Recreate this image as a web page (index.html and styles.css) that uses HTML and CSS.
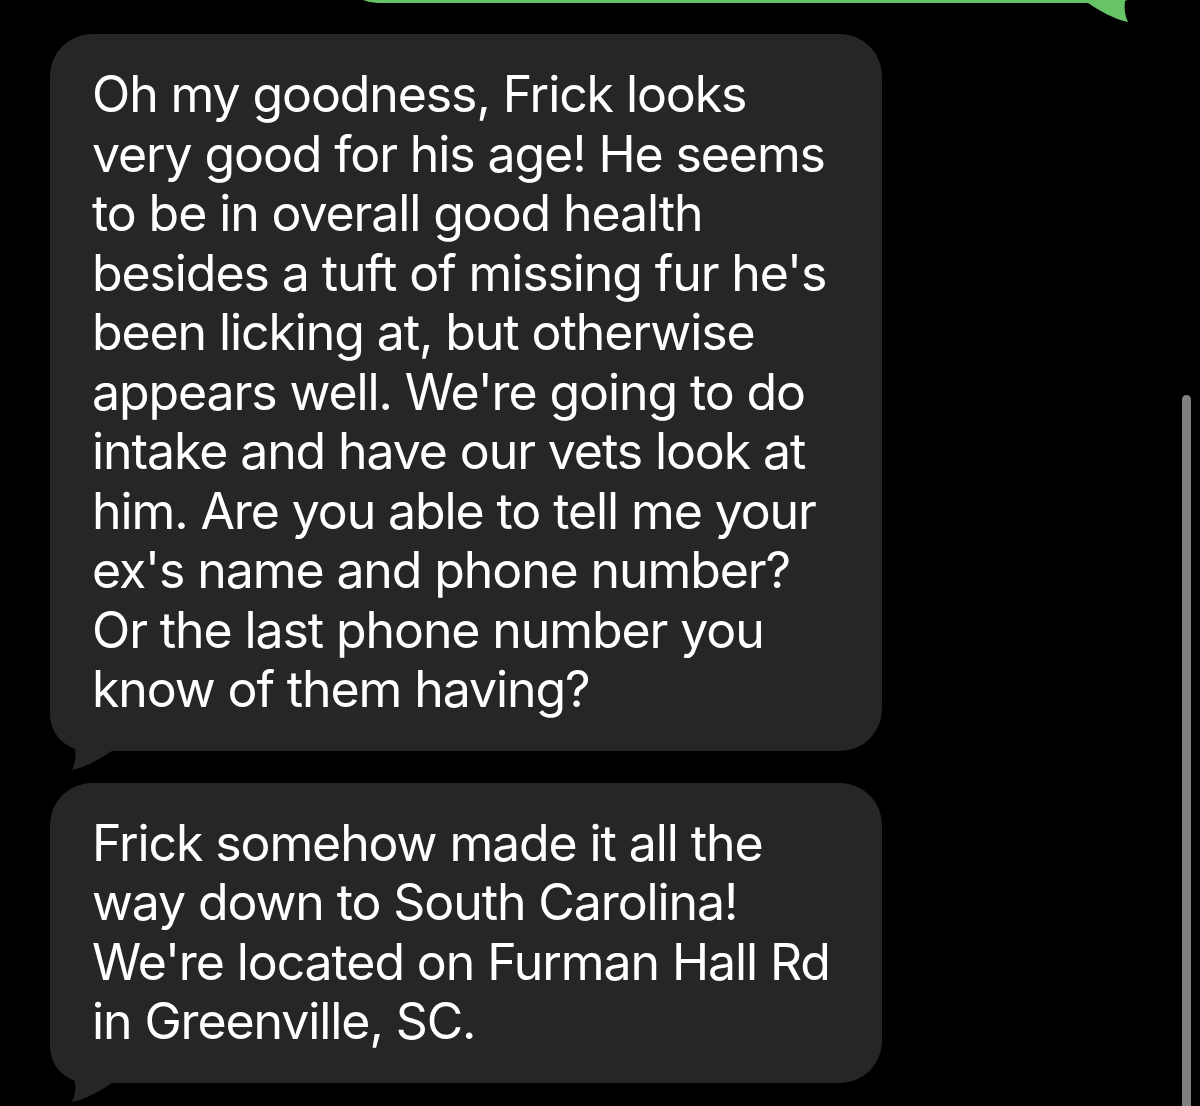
FILE: index.html
```html
<!DOCTYPE html>
<html lang="en">
<head>
    <meta charset="UTF-8">
    <meta name="viewport" content="width=device-width, initial-scale=1.0">
    <title>Messages</title>
    <link rel="stylesheet" href="styles.css">
</head>
<body>
    <div class="thread">
        <div class="bubble sent">
            <svg class="tail" viewBox="0 0 70 72" width="70" height="72">
                <path d="M0,0 L0,12 C0,30 10,42 25,48 C26,56 25,63 22,69 C36,66 50,58 62,50 L62,0 Z"/>
            </svg>
        </div>

        <div class="bubble received">
            <p>Oh my goodness, Frick looks<br>
            very good for his age! He seems<br>
            to be in overall good health<br>
            besides a tuft of missing fur he's<br>
            been licking at, but otherwise<br>
            appears well. We're going to do<br>
            intake and have our vets look at<br>
            him. Are you able to tell me your<br>
            ex's name and phone number?<br>
            Or the last phone number you<br>
            know of them having?</p>
            <svg class="tail" viewBox="0 0 70 72" width="70" height="72">
                <path d="M0,0 L0,12 C0,30 10,42 25,48 C26,56 25,63 22,69 C36,66 50,58 62,50 L62,0 Z"/>
            </svg>
        </div>

        <div class="bubble received">
            <p>Frick somehow made it all the<br>
            way down to South Carolina!<br>
            We're located on Furman Hall Rd<br>
            in Greenville, SC.</p>
            <svg class="tail" viewBox="0 0 70 72" width="70" height="72">
                <path d="M0,0 L0,12 C0,30 10,42 25,48 C26,56 25,63 22,69 C36,66 50,58 62,50 L62,0 Z"/>
            </svg>
        </div>
    </div>

    <div class="scrollbar"></div>
</body>
</html>
```

FILE: styles.css
```css
body {
    margin: 0;
    background: #000;
    height: 1106px;
    overflow: hidden;
    position: relative;
    font-family: Inter, "Open Sans", sans-serif;
}

.thread {
    display: flex;
    flex-direction: column;
    padding: 0 50px;
}

.bubble {
    position: relative;
    box-sizing: border-box;
    border-radius: 42px;
}

.bubble p {
    position: relative;
    z-index: 1; /* keep text above the tail */
    margin: 0;
    color: #fff;
    font-size: 50px;
    letter-spacing: -1.1px;
    line-height: 59.5px;
    white-space: nowrap;
}

/* outgoing green one, mostly scrolled off the top */
.sent {
    align-self: flex-end;
    width: 812px;
    height: 80px;
    margin-top: -77px;
    background: #66c466;
}

.received {
    align-self: flex-start;
    width: 832px;
    padding: 31px 42px;
    margin-top: 31px;
    background: #262628;
}

.received + .received {
    margin-top: 32px;
}

.tail {
    position: absolute;
    bottom: -22px;
}

.received .tail {
    left: 0;
    fill: #262628;
}

.sent .tail {
    right: 0;
    fill: #66c466;
    transform: scaleX(-1);
}

.scrollbar {
    position: absolute;
    left: 1182px;
    top: 395px;
    width: 9px;
    bottom: 0;
    background: #808080;
    border-radius: 5px 5px 0 0;
}
```
